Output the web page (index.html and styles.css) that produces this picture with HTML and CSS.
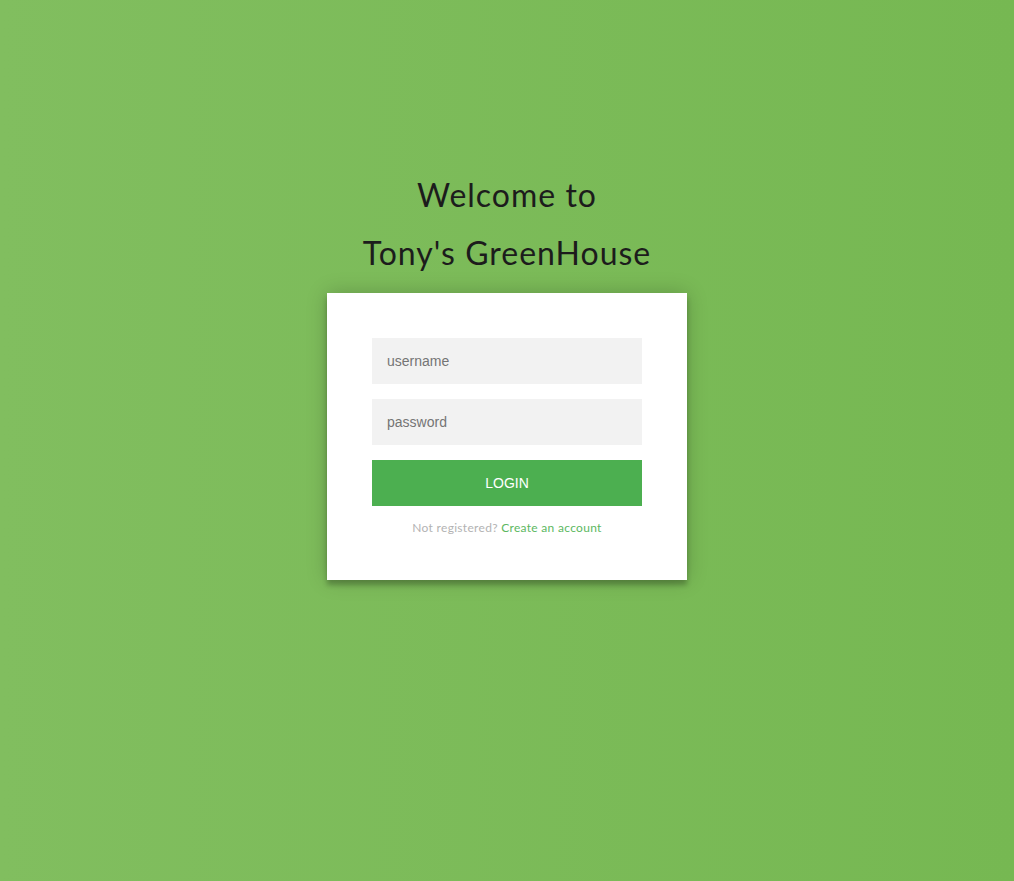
FILE: index.html
```html
<!DOCTYPE html>
<html lang="en">
<head>
<meta charset="utf-8">
<title>Tony's GreenHouse</title>
<link rel="stylesheet" href="styles.css">
</head>
<body>
<div class="login-page">
  <h1 class="title">Welcome to<br>Tony's GreenHouse</h1>
  <div class="form">
    <form class="login-form">
      <input type="text" placeholder="username">
      <input type="password" placeholder="password">
      <button type="button">login</button>
      <p class="message">Not registered? <a href="#">Create an account</a></p>
    </form>
  </div>
</div>
</body>
</html>
```
FILE: styles.css
```css
html, body {
  margin: 0;
  min-height: 100%;
}
body {
  min-height: 100vh;
  background: #76b852;
  background: linear-gradient(to left, #76b852, #81be5f);
  font-family: "Lato", "Liberation Sans", sans-serif;
}
.login-page {
  width: 360px;
  margin: 0 auto;
  padding-top: 166px;
}
.title {
  margin: 0 -40px 11px;
  font-family: "Lato", sans-serif;
  font-weight: 400;
  font-size: 32px;
  letter-spacing: 1px;
  line-height: 58px;
  color: #1c1c1c;
  text-align: center;
}
.form {
  background: #fff;
  padding: 45px;
  text-align: center;
  box-shadow: 0 0 20px 0 rgba(0,0,0,0.2), 0 5px 5px 0 rgba(0,0,0,0.24);
}
.login-form {
  display: flex;
  flex-direction: column;
}
.login-form input {
  font-family: "Liberation Sans", Arial, sans-serif;
  outline: 0;
  background: #f2f2f2;
  width: 100%;
  border: 0;
  margin: 0 0 15px;
  padding: 15px;
  box-sizing: border-box;
  font-size: 14px;
  line-height: 16px;
  height: 46px;
  color: #333;
}
.login-form input::placeholder {
  color: #757575;
}
.login-form button {
  font-family: "Liberation Sans", Arial, sans-serif;
  text-transform: uppercase;
  outline: 0;
  background: #4caf50;
  width: 100%;
  border: 0;
  padding: 15px;
  height: 46px;
  color: #fff;
  font-size: 14px;
  line-height: 16px;
  cursor: pointer;
}
.message {
  margin: 15px 0 0;
  color: #b3b3b3;
  font-size: 12px;
  letter-spacing: 0.3px;
  line-height: 14px;
}
.message a {
  color: #5cb85f;
  text-decoration: none;
}
```
